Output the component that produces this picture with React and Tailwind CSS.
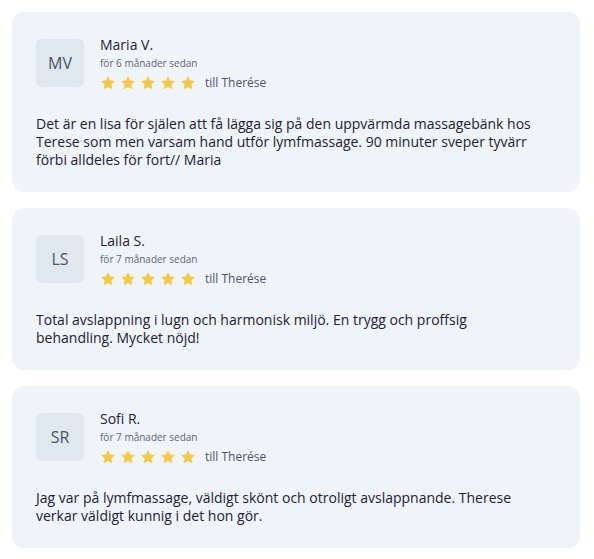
const reviews = [
  {
    initials: "MV",
    name: "Maria V.",
    when: "för 6 månader sedan",
    text: "Det är en lisa för själen att få lägga sig på den uppvärmda massagebänk hos Terese som men varsam hand utför lymfmassage. 90 minuter sveper tyvärr förbi alldeles för fort// Maria",
  },
  {
    initials: "LS",
    name: "Laila S.",
    when: "för 7 månader sedan",
    text: "Total avslappning i lugn och harmonisk miljö. En trygg och proffsig behandling. Mycket nöjd!",
  },
  {
    initials: "SR",
    name: "Sofi R.",
    when: "för 7 månader sedan",
    text: "Jag var på lymfmassage, väldigt skönt och otroligt avslappnande. Therese verkar väldigt kunnig i det hon gör.",
  },
];

const Star = () => (
  <svg width="16" height="16" viewBox="0 0 24 24" className="shrink-0">
    <path
      d="M12 1.5l3.2 6.7 7.3.9-5.4 5.1 1.4 7.3L12 18l-6.5 3.5 1.4-7.3-5.4-5.1 7.3-.9z"
      fill="#f6c944"
    />
  </svg>
);

const ReviewCard = ({ review }) => {
  return (
    <div className="w-[568px] rounded-[12px] bg-[#eff4f9] px-[24px] pt-[24px] pb-[23px]">
      <div className="flex items-start gap-[16px]">
        <div className="mt-[3px] flex h-[48px] w-[48px] shrink-0 items-center justify-center rounded-[6px] bg-[#dfe7ef] text-[16px] text-[#4a5568]">
          {review.initials}
        </div>
        <div className="flex flex-col">
          <div className="text-[14px] leading-[18px] text-[#1c2434]">{review.name}</div>
          <div className="mt-[2px] text-[10px] leading-[14px] text-[#5b6577]">{review.when}</div>
          <div className="mt-[5px] flex h-[16px] items-center">
            <div className="flex gap-[4px]">
              <Star />
              <Star />
              <Star />
              <Star />
              <Star />
            </div>
            <span className="ml-[9px] text-[12px] leading-[16px] text-[#4a5568]">till Therése</span>
          </div>
        </div>
      </div>
      <p className="mt-[24px] max-w-[510px] text-[14px] leading-[18px] text-[#1b2233]">{review.text}</p>
    </div>
  );
};

export default function App() {
  return (
    <div
      className="min-h-[559px] bg-white px-[12px] pt-[12px]"
      style={{ fontFamily: "'Open Sans', 'Noto Sans', sans-serif" }}
    >
      <div className="flex flex-col gap-[16px]">
        {reviews.map((r) => (
          <ReviewCard key={r.initials} review={r} />
        ))}
      </div>
    </div>
  );
}
